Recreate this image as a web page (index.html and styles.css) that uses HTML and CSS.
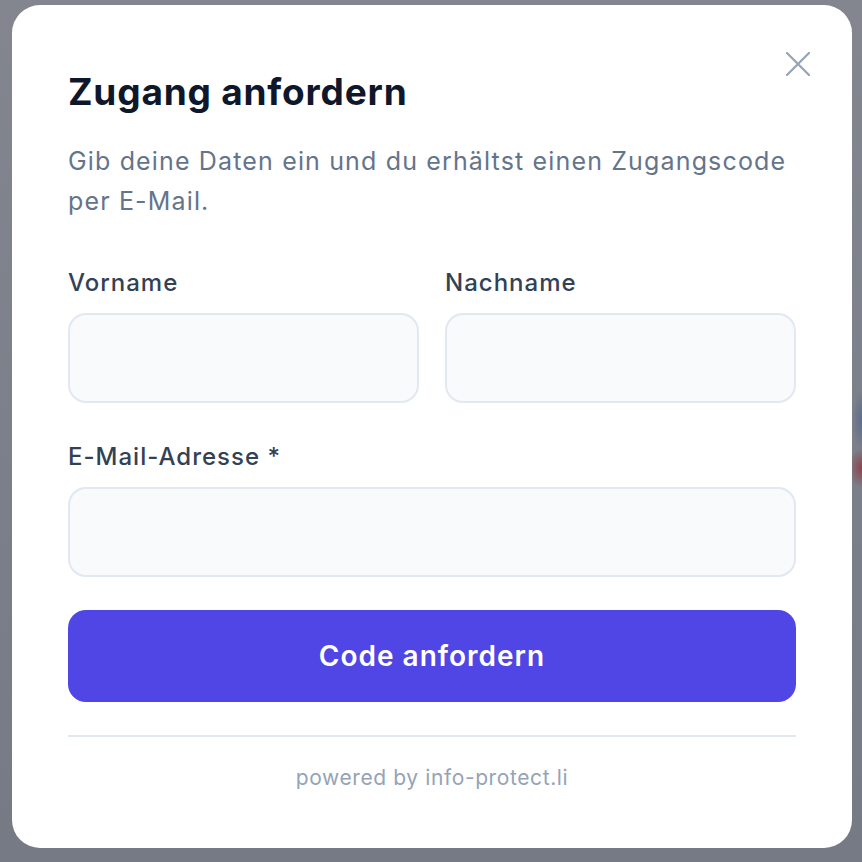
FILE: index.html
```html
<!DOCTYPE html>
<html lang="de">
<head>
<meta charset="utf-8">
<title>Zugang anfordern</title>
<link rel="stylesheet" href="styles.css">
</head>
<body>
<div class="backdrop">
  <div class="modal" role="dialog" aria-labelledby="title">
    <button class="close" aria-label="Schließen">
      <svg width="24" height="24" viewBox="0 0 24 24" fill="none" stroke="currentColor" stroke-width="2.2" stroke-linecap="round"><path d="M1 1L23 23M23 1L1 23"/></svg>
    </button>
    <h1 id="title" class="title">Zugang anfordern</h1>
    <p class="subtitle">Gib deine Daten ein und du erhältst einen Zugangscode per E-Mail.</p>
    <form class="form">
      <div class="row">
        <label class="field">
          <span class="label">Vorname</span>
          <input class="input" type="text">
        </label>
        <label class="field">
          <span class="label">Nachname</span>
          <input class="input" type="text">
        </label>
      </div>
      <label class="field">
        <span class="label">E-Mail-Adresse *</span>
        <input class="input" type="email">
      </label>
      <button type="button" class="submit">Code anfordern</button>
    </form>
    <div class="divider"></div>
    <p class="footer">powered by info-protect.li</p>
  </div>
</div>
</body>
</html>
```

FILE: styles.css
```css
* { box-sizing: border-box; }
html, body { margin: 0; padding: 0; }
body {
  width: 862px;
  height: 862px;
  overflow: hidden;
  font-family: Inter, "Noto Sans", "Liberation Sans", sans-serif;
  background:
    radial-gradient(ellipse 14px 20px at 862px 468px, rgba(150,40,50,0.7), rgba(150,40,50,0) 100%),
    radial-gradient(ellipse 10px 30px at 862px 420px, rgba(60,90,140,0.5), rgba(60,90,140,0) 100%),
    linear-gradient(180deg, #83868f 0%, #7c808a 50%, #767a84 100%);
}
.backdrop {
  padding: 5px 0 0 12px;
}
.modal {
  position: relative;
  width: 840px;
  height: 843px;
  background: #ffffff;
  border-radius: 28px;
  padding: 67px 56px 0 56px;
  display: flex;
  flex-direction: column;
}
.close {
  position: absolute;
  top: 47px;
  right: 42px;
  width: 24px;
  height: 24px;
  padding: 0;
  border: 0;
  background: transparent;
  color: #94a3b8;
  display: flex;
}
.title {
  margin: 0;
  font-size: 37px;
  line-height: 40px;
  font-weight: 700;
  color: #0f172a;
  letter-spacing: 0.8px;
}
.subtitle {
  margin: 29px 0 0 0;
  font-size: 25px;
  line-height: 40px;
  color: #64748b;
  font-weight: 400;
  letter-spacing: 1.15px;
}
.form {
  margin-top: 46px;
  display: flex;
  flex-direction: column;
}
.row {
  display: grid;
  grid-template-columns: 1fr 1fr;
  column-gap: 26px;
  margin-bottom: 38px;
}
.field {
  display: flex;
  flex-direction: column;
  gap: 14px;
}
.label {
  font-size: 24px;
  line-height: 32px;
  font-weight: 500;
  color: #334155;
  letter-spacing: 1px;
}
.input {
  height: 90px;
  width: 100%;
  border: 2.5px solid #e2e8f0;
  background: #f8fafc;
  border-radius: 18px;
  font: inherit;
  outline: none;
}
.submit {
  margin-top: 33px;
  height: 92px;
  border: 0;
  border-radius: 18px;
  background: #4f46e5;
  color: #ffffff;
  font-family: inherit;
  font-size: 28px;
  font-weight: 600;
  letter-spacing: 1px;
}
.divider {
  margin-top: 33px;
  height: 2px;
  background: #e2e8f0;
}
.footer {
  margin: 27px 0 0 0;
  text-align: center;
  font-size: 21px;
  line-height: 28px;
  color: #94a3b8;
  letter-spacing: 0.6px;
}
```
